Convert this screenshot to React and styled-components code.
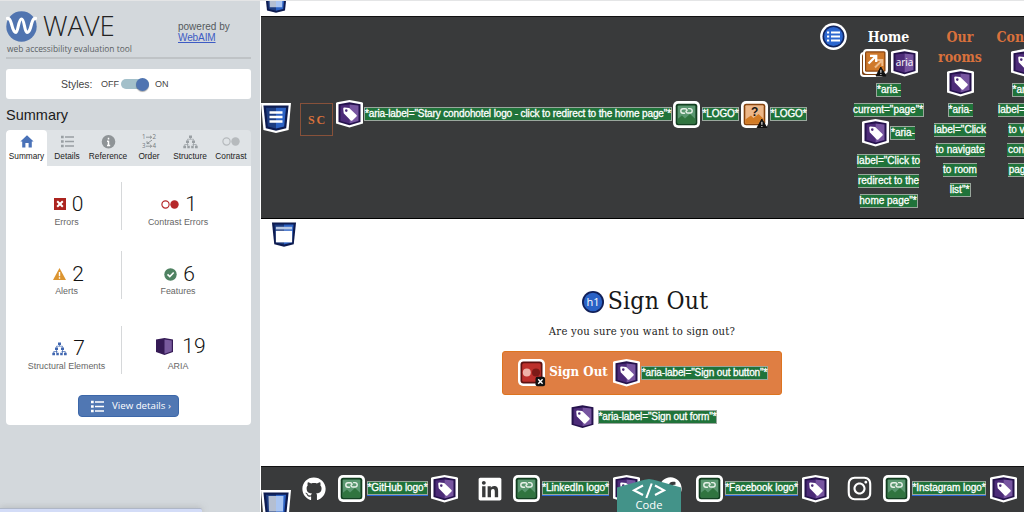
import React from "react";
import styled, { createGlobalStyle } from "styled-components";
import { FaGithub, FaLinkedin, FaFacebook, FaInstagram } from "react-icons/fa";

const sans = '"Liberation Sans", Arial, sans-serif';
const open = '"Open Sans", sans-serif';
const serif = '"DejaVu Serif Condensed", "DejaVu Serif", serif';

const Global = createGlobalStyle`
  * { box-sizing: border-box; }
  body { margin: 0; overflow: hidden; font-family: ${sans}; }
  svg { display: block; flex: none; }
`;

const Screen = styled.div`
  display: flex;
  width: 1024px;
  height: 512px;
  overflow: hidden;
  border-top: 1px solid #e4e5e6;
  background: #fff;
`;

/* ---------- sidebar ---------- */
const Sidebar = styled.aside`
  width: 260px;
  flex: none;
  height: 511px;
  padding: 0 9px 0 6px;
  background: #d3d8dc;
  display: flex;
  flex-direction: column;
`;
const Brand = styled.header`
  height: 58px;
  padding-top: 9px;
  border-bottom: 2px solid #bfc3c6;
  display: flex;
  justify-content: space-between;
`;
const BrandTop = styled.div`
  display: flex;
  align-items: center;
  gap: 6px;
  height: 32px;
`;
const BrandName = styled.span`
  font: 300 27.5px/32px ${open};
  letter-spacing: -0.1px;
  color: #222;
`;
const Tagline = styled.div`
  font: 400 8.4px/12px ${open};
  color: #5b5f63;
  padding-left: 1px;
  margin-top: 1px;
  white-space: nowrap;
`;
const Powered = styled.div`
  width: 73px;
  padding-top: 11px;
  font-size: 10px;
  line-height: 11px;
  color: #54585c;
`;
const Link = styled.a`
  display: block;
  width: max-content;
  color: #3d5bc4;
  text-decoration: underline;
  letter-spacing: -0.1px;
`;
const Styles = styled.div`
  height: 30px;
  margin-top: 10px;
  padding-left: 55px;
  background: #fff;
  border-radius: 3px;
  display: flex;
  align-items: center;
  font-size: 9px;
  color: #444;
`;
const StylesLabel = styled.span`
  width: 40px;
  font-size: 10.5px;
`;
const Track = styled.span`
  width: 28px;
  height: 10px;
  margin: 0 6px 0 2px;
  border-radius: 5px;
  background: #a3c0ca;
  display: flex;
  align-items: center;
  justify-content: flex-end;
`;
const Knob = styled.span`
  width: 13px;
  height: 13px;
  border-radius: 50%;
  background: #4f74b1;
  box-shadow: 0 1px 1px #0005;
`;
const Heading = styled.h2`
  margin: 6px 0 0;
  height: 25px;
  font: 400 14.5px/20px ${sans};
  color: #1b1b1b;
`;
const Tabs = styled.nav`
  height: 36px;
  display: flex;
  border-radius: 4px 4px 0 0;
  background: #dfe3e6;
  overflow: hidden;
`;
const Tab = styled.div`
  flex: 0 0 ${(p) => p.$w}px;
  display: flex;
  flex-direction: column;
  align-items: center;
  padding-top: 4px;
  border-radius: 4px 4px 0 0;
  background: ${(p) => (p.$active ? "#fff" : "transparent")};
  font-size: 8.3px;
  line-height: 12px;
  color: #222;
  white-space: nowrap;
  svg { margin-bottom: 1px; }
`;
const Panel = styled.section`
  height: 259px;
  background: #fff;
  border-radius: 0 0 4px 4px;
  display: flex;
  flex-direction: column;
  align-items: center;
  padding-top: 16px;
`;
const StatRow = styled.div`
  width: 100%;
  height: 48px;
  margin-bottom: ${(p) => p.$gap}px;
  display: flex;
`;
const Stat = styled.div`
  width: ${(p) => (p.$left ? 116 : 129)}px;
  padding-left: ${(p) => (p.$left ? 6 : 0)}px;
  padding-right: ${(p) => (p.$left ? 0 : 17)}px;
  border-right: ${(p) => (p.$left ? "1px solid #d6d8da" : "0")};
  display: flex;
  flex-direction: column;
  align-items: center;
`;
const Count = styled.div`
  display: flex;
  align-items: center;
  gap: ${(p) => p.$gap ?? 6}px;
  height: 24px;
  margin-top: ${(p) => 11 - (p.$up ?? 0)}px;
  margin-bottom: ${(p) => p.$up ?? 0}px;
  padding-left: ${(p) => p.$pl ?? 4}px;
  font: 300 21px/24px Roboto, ${sans};
  color: #111;
`;
const StatLabel = styled.div`
  font-size: 8.9px;
  line-height: 10px;
  color: #666;
  white-space: nowrap;
`;
const Details = styled.button`
  width: 101px;
  height: 22px;
  padding: 0 0 0 12px;
  border: 1px solid #3c67a9;
  border-radius: 4px;
  background: #5077b3;
  color: #fff;
  display: flex;
  align-items: center;
  gap: 8px;
  font: 400 9.7px/20px ${open};
  white-space: nowrap;
`;
const StatusStrip = styled.div`
  width: 202px;
  height: 4px;
  margin: auto 0 0 -6px;
  background: #d3dcf7;
  border-top: 1px solid #aeb6c6;
  border-radius: 0 2px 0 0;
  box-shadow: 0 0 6px #8888;
`;

/* ---------- evaluated page ---------- */
const Page = styled.main`
  flex: 1;
  min-width: 0;
  display: flex;
  flex-direction: column;
  border-left: 1px solid #fff;
  overflow: hidden;
  position: relative;
`;
const Strip = styled.div`
  height: 15px;
  flex: none;
  padding: 0 0 2px 3px;
  overflow: hidden;
  display: flex;
  align-items: flex-end;
`;
const Header = styled.header`
  height: 203px;
  flex: none;
  background: #393a3b;
  border-top: 1px solid #111;
  border-bottom: 1px solid #000;
  display: flex;
  align-items: flex-start;
  overflow: hidden;
`;
const Landmark = styled.div`
  width: 30px;
  flex: none;
  margin-top: 86px;
`;
const LogoBox = styled.div`
  width: 33px;
  height: 33px;
  flex: none;
  margin: 86px 3px 0 9px;
  border: 1px solid #87513a;
  background: #353839;
  color: #d9713c;
  font: 700 12px/33px "Liberation Serif", serif;
  letter-spacing: 1.8px;
  padding-left: 2px;
  text-align: center;
`;
const LogoLine = styled.div`
  display: flex;
  align-items: center;
  flex: none;
  width: 484px;
  margin-top: 83px;
`;
const Tag = styled.span`
  display: inline-flex;
  flex: none;
  justify-content: center;
  align-items: center;
  width: ${(p) => p.$w}px;
  height: 14px;
  margin: ${(p) => p.$m ?? 0};
  background: #20733a;
  border: solid #9aa79d;
  border-width: 1px ${(p) => (p.$end === false ? 0 : 1)}px 1px ${(p) => (p.$start === false ? 0 : 1)}px;
  color: #fff;
  font: 400 10px/12px ${sans};
  -webkit-text-stroke: 0.3px #fff;
  white-space: nowrap;
  letter-spacing: ${(p) => p.$ls ?? 0}px;
  ${(p) => p.$link && "box-shadow: 0 1px 0 #2866d8;"}
`;
const ListBadge = styled.div`
  flex: none;
  margin: 6px 0 0;
  width: 28px;
`;
const Column = styled.div`
  flex: none;
  width: ${(p) => p.$w}px;
  margin-left: ${(p) => p.$ml}px;
  padding-top: 10px;
  display: flex;
  flex-direction: column;
  align-items: center;
`;
const NavLine = styled.div`
  height: 20px;
  font: 700 14px/21px ${serif};
  color: ${(p) => p.$color};
`;
const IconLine = styled.div`
  height: ${(p) => p.$h}px;
  padding-bottom: ${(p) => p.$pb ?? 0}px;
  display: flex;
  align-items: center;
  gap: ${(p) => p.$gap}px;
`;
const TagLine = styled.div`
  height: 20px;
  padding-top: 1px;
  display: flex;
  align-items: center;
`;
const Body = styled.section`
  height: 247px;
  flex: none;
  display: flex;
  flex-direction: column;
`;
const MainLandmark = styled.div`
  height: 28px;
  padding: 3px 0 0 10px;
`;
const Form = styled.form`
  width: 280px;
  margin: 36px 0 0 241px;
  display: flex;
  flex-direction: column;
  align-items: center;
`;
const Title = styled.h1`
  margin: 0 0 0 6px;
  height: 36px;
  display: flex;
  align-items: center;
  gap: 4px;
  font: 400 24.5px/34px ${serif};
  letter-spacing: 0.25px;
  color: #181818;
  white-space: nowrap;
  svg { margin-top: 2px; }
`;
const Question = styled.p`
  margin: 4px 0 0;
  height: 18px;
  font: 400 11.2px/18px ${serif};
  letter-spacing: 0.25px;
  color: #222;
  white-space: nowrap;
`;
const Submit = styled.div`
  width: 280px;
  height: 44px;
  margin-top: 10px;
  padding-left: 15px;
  border: 1px solid #dd741f;
  border-radius: 3px;
  background: #df7e43;
  display: flex;
  align-items: center;
`;
const SubmitText = styled.span`
  width: 59px;
  margin: -2px 5px 0 3px;
  text-align: center;
  white-space: nowrap;
  font: 700 13.2px/20px ${serif};
  color: #fff;
`;
const FormTag = styled.div`
  display: flex;
  align-items: center;
  gap: 4px;
  margin: 10px 0 0 4px;
`;
const Footer = styled.footer`
  height: 46px;
  flex: none;
  background: #393a3b;
  border-top: 1px solid #111;
  display: flex;
  align-items: flex-start;
  overflow: hidden;
`;
const FooterMark = styled.div`
  width: 30px;
  flex: none;
  margin-top: 23px;
`;
const Social = styled.div`
  flex: none;
  display: flex;
  align-items: center;
  height: 29px;
  margin: 7px 0 0 ${(p) => p.$ml}px;
  color: #fff;
`;
const SocialTag = styled.div`
  display: flex;
  align-items: center;
  margin: -1px ${(p) => p.$mr}px 0 2px;
`;
const SocialIcon = styled.div`
  width: ${(p) => p.$w}px;
`;
const CodeTab = styled.div`
  position: absolute;
  left: 356px;
  bottom: 0;
  width: 64px;
  height: 33px;
  overflow: hidden;
  clip-path: polygon(0 26%, 37% 5%, 43% 2%, 50% 0, 57% 2%, 63% 5%, 100% 26%, 100% 100%, 0 100%);
  background: #439389;
  color: #fff;
  display: flex;
  flex-direction: column;
  align-items: center;
  font: 400 11.2px/12px ${open};
  svg { margin: 4px 0 0; }
`;

/* ---------- drawings ---------- */
const shield = "M1 2.2 13.5 0 26 2.2 27 3V23.4L13.5 27.5 0 23.4V3Z";
const Aria = ({ label, bare, size = 27 }) => (
  <svg width={size} height={(size * 28) / 27} viewBox={bare ? "2 2 23 24" : "0 0 27 28"}>
    {!bare && <path d={shield} fill="#fff" />}
    <path d="M2.5 4.2 13.5 2.3 24.5 4.2V22L13.5 25.2 2.5 22Z" fill="#25124c" />
    <path d="M4.5 5.5 13.5 4.5V23.5L4.5 21Z" fill="#4c2b78" />
    <path d="M13.5 4.5 22.5 5.5V21L13.5 23.5Z" fill="#7755a0" />
    {label ? (
      <text x="13.5" y="17" textAnchor="middle" fill="#fff" fontFamily="Open Sans" fontSize="10">aria</text>
    ) : (
      <path fillRule="evenodd" fill="#fff" d="M7.2 8.8Q7.2 7.5 8.5 7.5L13.2 8 20.5 15Q21.2 15.8 20.5 16.5L16.4 20.5Q15.5 21.2 14.7 20.4L7.7 13.3ZM10.3 9.3A1.3 1.3 0 1 0 10.3 11.9 1.3 1.3 0 1 0 10.3 9.3Z" />
    )}
  </svg>
);
const Warn = () => (
  <g>
    <path d="M20.8 18 26 27H16Z" fill="#111" stroke="#111" strokeLinejoin="round" />
    <path d="M20.9 20.8V23.8M20.9 25V26" stroke="#fff" strokeWidth="1" />
  </g>
);
const Alt = () => (
  <svg width="27" height="27" viewBox="0 0 27 27">
    <rect width="27" height="27" rx="5" fill="#fff" />
    <rect x="2.7" y="2.7" width="21.6" height="21.6" rx="2.5" fill="#123f20" />
    <rect x="4.6" y="4.6" width="17.8" height="17.8" rx="1" fill="#5a9770" />
    <path d="M4.6 18 9 14.5 12 17.5 17 13 22.4 18V22.4H4.6Z" fill="#30743f" />
    <path d="M11.5 12.2H10A2.2 2.2 0 0 1 10 7.8H12.3C14.3 7.8 14.6 9.9 13 10.2M15.6 7.6H17A2.2 2.2 0 0 1 17 12H14.8C12.8 12 12.4 9.9 14 9.6" fill="none" stroke="#e8f1e9" strokeWidth="1.4" strokeLinecap="round" />
  </svg>
);
const AltQuestion = () => (
  <svg width="27" height="27" viewBox="0 0 27 27">
    <rect width="27" height="27" rx="5" fill="#fff" />
    <rect x="2.7" y="2.7" width="21.6" height="21.6" rx="2.5" fill="#87430d" />
    <rect x="4.3" y="4.3" width="18.4" height="18.4" rx="1" fill="#edb788" />
    <path d="M4.3 18.5 10 14.5 12.5 17 17.5 13 22.7 18V22.7H4.3Z" fill="#d27b25" />
    <text x="13.7" y="14.5" textAnchor="middle" fontFamily="Liberation Sans" fontWeight="700" fontSize="12" letterSpacing="0" fill="#161616">?</text>
    <Warn />
  </svg>
);
const Redundant = () => (
  <svg width="28" height="28" viewBox="0 0 28 28">
    <rect x="0" y="3" width="24" height="25" rx="4" fill="#fff" />
    <rect x="2" y="5" width="20" height="21" rx="2" fill="#7c3f10" />
    <rect x="3" width="25" height="25" rx="4" fill="#fff" />
    <rect x="5" y="2.3" width="20.5" height="20.5" rx="1.5" fill="#8a4612" />
    <rect x="6.2" y="3.5" width="18" height="18" fill="#cf792b" />
    <path d="M15 18.5 22 11.5M17 11H22.3V17" stroke="#efbc8a" strokeWidth="2" fill="none" />
    <path d="M8.5 14.5 15.5 7.5M10 6.8H16.2V13" stroke="#fff" strokeWidth="2.3" fill="none" />
    <Warn />
  </svg>
);
const ContrastError = () => (
  <svg width="28" height="28" viewBox="0 0 28 28">
    <rect width="27" height="27" rx="5" fill="#fff" />
    <rect x="2.5" y="2.5" width="22" height="22" rx="3" fill="#5e1212" />
    <rect x="4.2" y="4.2" width="18.6" height="18.6" rx="1.5" fill="#bd302c" />
    <circle cx="8.8" cy="13.5" r="4" fill="#efb2a9" />
    <circle cx="18" cy="13.5" r="4" fill="#7d1a17" />
    <rect x="17.5" y="17.8" width="9.6" height="9.4" rx="2" fill="#111" />
    <path d="M20.2 20.3 24.6 24.8M24.6 20.3 20.2 24.8" stroke="#fff" strokeWidth="1.4" />
  </svg>
);
const Bucket = ({ kind, w = 30 }) => (
  <svg width={w} height={w} viewBox={kind === "main" || kind === "top" ? "1.4 2 27.2 27.2" : "0 0 30 30"}>
    {(kind === "nav" || kind === "foot") && <path d="M0 0H30L27.6 27 15 30 2.4 27Z" fill="#fff" />}
    <path d="M2.4 2.4H27.6L25.2 25.2 15 27.8 4.8 25.2Z" fill="#0d1b50" />
    <path d="M5 4.7H15V25.5L6.8 23.4Z" fill="#1d3c80" />
    <path d="M25 4.7H15V25.5L23.2 23.4Z" fill="#2c62c4" />
    {kind === "nav" && <path d="M8.5 9.5H21.5M8.5 14H21.5M8.5 18.5H21.5" stroke="#fff" strokeWidth="2.4" />}
    {kind === "main" && (
      <g>
        <path d="M6.5 7H23.5V9.8H6.5Z" fill="#b9c9e4" />
        <path d="M6.5 11.2H23.5V23.3H6.5Z" fill="#fff" />
      </g>
    )}
    {(kind === "foot" || kind === "top") && (
      <g>
        <path d="M7.5 6H15V21.5H8Z" fill="#b4bfd2" />
        <path d="M15 6H22.5L22 21.5H15Z" fill="#a9c5f2" />
      </g>
    )}
  </svg>
);
const ListIcon = () => (
  <svg width="27" height="27" viewBox="0 0 27 27">
    <circle cx="13.5" cy="13.5" r="13.4" fill="#fff" />
    <circle cx="13.5" cy="13.5" r="11" fill="#10245f" />
    <circle cx="13.5" cy="13.5" r="9.4" fill="#2b66cf" />
    <path d="M11 9.5H20M11 13.5H20M11 17.5H20" stroke="#fff" strokeWidth="2" />
    <path d="M7 9.5H9.2M7 13.5H9.2M7 17.5H9.2" stroke="#fff" strokeWidth="2.2" />
  </svg>
);
const H1Icon = () => (
  <svg width="22" height="22" viewBox="0 0 22 22">
    <circle cx="11" cy="11" r="11" fill="#101f58" />
    <circle cx="11" cy="11" r="9.2" fill="#2a62c6" />
    <text x="11" y="15.2" textAnchor="middle" fontFamily="Open Sans" fontSize="11" letterSpacing="0" fill="#fff">h1</text>
  </svg>
);
const WaveLogo = () => (
  <svg width="31" height="31" viewBox="0 0 31 31">
    <circle cx="15.5" cy="15.5" r="15.2" fill="#5074b0" />
    <path d="M0 8C3 6 4.5 9 5.5 13S8 21.5 10 21.5 12.5 8 15.5 8 18.5 21.5 21 21.5 24.5 17 25.5 13 28 6 31 8" fill="none" stroke="#fff" strokeWidth="3.1" />
  </svg>
);
const Bullets = ({ c = "#999fa3", w = 13 }) => (
  <svg width={w} height="15" viewBox="0 0 13 15">
    <path d="M4 3H13M4 7.5H13M4 12H13" stroke={c} strokeWidth={c === "#fff" ? 1.7 : 1.3} />
    <path d="M0 3H2.7M0 7.5H2.7M0 12H2.7" stroke={c} strokeWidth="2.4" />
  </svg>
);
const Tree = ({ c = "#999fa3", h = 15 }) => (
  <svg width="15" height={h} viewBox="0 0 15 15">
    <path d="M6 1.5H9V4H6ZM3 6.5H6V9H3ZM9 6.5H12V9H9ZM.3 11.8H3V14.2H.3ZM4.3 11.8H6.8V14.2H4.3ZM8.2 11.8H10.7V14.2H8.2ZM12 11.8H14.7V14.2H12Z" fill={c} />
    <path d="M7.5 4V5.2M4.5 6.5V5.2H10.5V6.5M4.5 9V12M10.5 9V12M1.7 12V10.5H5.5M9.5 10.5H13.3V12" stroke={c} strokeWidth=".7" fill="none" />
  </svg>
);
const Home = () => (
  <svg width="14" height="15" viewBox="0 0 14 15">
    <path d="M7 1.2 13.6 7.6H11.8V13.5H8.6V9H5.4V13.5H2.2V7.6H.4Z" fill="#4a72b8" />
  </svg>
);
const Info = () => (
  <svg width="15" height="15" viewBox="0 0 15 15">
    <circle cx="7.5" cy="7.8" r="6.8" fill="#8f9497" />
    <path d="M7.5 3.7V5.5M7.5 6.7V11.7M6 7.2H7.5M6 11.4H9.2" stroke="#fff" strokeWidth="1.5" />
  </svg>
);
const Order = () => (
  <svg width="15" height="15" viewBox="0 0 15 15" fill="#74797d" fontFamily="Open Sans" fontSize="6.2">
    <text x="0" y="5.3">1</text><text x="10.5" y="5.3">2</text>
    <text x="0" y="14.3">3</text><text x="10.5" y="14.3">4</text>
    <path d="M4 3.2H9.5M8 1.8 9.7 3.2 8 4.6M4 12.2H9.5M8 10.8 9.7 12.2 8 13.6M10 6.2 5 9.5M5 7.2V9.6H7.5" stroke="#7f8589" strokeWidth=".8" fill="none" />
  </svg>
);
const Circles = ({ c = "#b6babd", w = 18, h = 15 }) => (
  <svg width={w} height={h} viewBox="0 0 18 15">
    <circle cx="4.5" cy="7.5" r="3.6" fill="none" stroke={c} strokeWidth="1.2" />
    <circle cx="13.5" cy="7.5" r="4.2" fill={c} />
  </svg>
);
const ErrorIcon = () => (
  <svg width="12" height="12" viewBox="0 0 12 12">
    <rect width="12" height="12" fill="#ac241f" />
    <path d="M3.2 3.2 8.8 8.8M8.8 3.2 3.2 8.8" stroke="#fff" strokeWidth="2" />
  </svg>
);
const AlertIcon = () => (
  <svg width="13" height="12" viewBox="0 0 13 12">
    <path d="M6.5 0 13 12H0Z" fill="#dc9530" />
    <path d="M6.5 4V8.3M6.5 9.2V10.7" stroke="#fff" strokeWidth="1.4" />
  </svg>
);
const CheckIcon = () => (
  <svg width="13" height="13" viewBox="0 0 13 13">
    <circle cx="6.5" cy="6.5" r="6.2" fill="#4f8262" />
    <path d="M3.5 6.4 5.8 8.6 9.7 4.5" stroke="#fff" strokeWidth="1.6" fill="none" />
  </svg>
);
const Cube = () => (
  <svg width="17" height="17" viewBox="0 0 17 17">
    <path d="M0 1.5 8.5 0 17 1.5V14L8.5 17 0 14Z" fill="#351a55" />
    <path d="M8.5 1.5 15.8 2.5V13.3L8.5 15.8Z" fill="#795b9e" />
  </svg>
);
const CodeGlyph = () => (
  <svg width="34" height="16" viewBox="0 0 34 16">
    <path d="M11 2.5 2 7.3 11 12M23 2.5 32 7.3 23 12M19.7.5 14.3 15" fill="none" stroke="#fff" strokeWidth="2.1" />
  </svg>
);

const tabs = [
  ["Summary", Home, 41], ["Details", Bullets, 40], ["Reference", Info, 42],
  ["Order", Order, 40], ["Structure", Tree, 42], ["Contrast", Circles, 40],
];

const Lines = ({ items }) =>
  items.map(([text, w, start, end], i) => (
    <TagLine key={i}><Tag $w={w} $start={start} $end={end}>{text}</Tag></TagLine>
  ));

const socials = [
  [FaGithub, 24, "*GitHub logo*", 61, 3, 11, 36],
  [FaLinkedin, 26, "*LinkedIn logo*", 67, 4, 19, 36],
  [FaFacebook, 23, "*Facebook logo*", 73, 4, 19, 37],
  [FaInstagram, 27, "*Instagram logo*", 74, 4, 17, 37],
];

export default function App() {
  return (
    <Screen>
      <Global />
      <Sidebar>
        <Brand>
          <div>
            <BrandTop><WaveLogo /><BrandName>WAVE</BrandName></BrandTop>
            <Tagline>web accessibility evaluation tool</Tagline>
          </div>
          <Powered>powered by<Link>WebAIM</Link></Powered>
        </Brand>
        <Styles>
          <StylesLabel>Styles:</StylesLabel>
          <span>OFF</span><Track><Knob /></Track><span>ON</span>
        </Styles>
        <Heading>Summary</Heading>
        <Tabs>
          {tabs.map(([name, Icon, w], i) => (
            <Tab key={name} $w={w} $active={i === 0}><Icon />{name}</Tab>
          ))}
        </Tabs>
        <Panel>
          <StatRow $gap={21}>
            <Stat $left><Count $up={1}><ErrorIcon />0</Count><StatLabel>Errors</StatLabel></Stat>
            <Stat><Count $up={1} $pl={2}><Circles c="#b5282a" />1</Count><StatLabel>Contrast Errors</StatLabel></Stat>
          </StatRow>
          <StatRow $gap={27}>
            <Stat $left><Count><AlertIcon />2</Count><StatLabel>Alerts</StatLabel></Stat>
            <Stat><Count $pl={3}><CheckIcon />6</Count><StatLabel>Features</StatLabel></Stat>
          </StatRow>
          <StatRow $gap={21}>
            <Stat $left><Count $up={1} $pl={4}><Tree c="#3f66b0" />7</Count><StatLabel>Structural Elements</StatLabel></Stat>
            <Stat><Count $up={3} $pl={6} $gap={9}><Cube />19</Count><StatLabel>ARIA</StatLabel></Stat>
          </StatRow>
          <Details><Bullets c="#fff" />View details ›</Details>
        </Panel>
        <StatusStrip />
      </Sidebar>

      <Page>
        <Strip><Bucket kind="top" w={24} /></Strip>
        <Header>
          <Landmark><Bucket kind="nav" /></Landmark>
          <LogoBox>SC</LogoBox>
          <LogoLine>
            <Aria />
            <Tag $w={308} $ls={-0.12} $m="0 1px">*aria-label="Stary condohotel logo - click to redirect to the home page"*</Tag>
            <Alt /><Tag $w={37} $ls={-0.15} $m="0 2px">*LOGO*</Tag>
            <AltQuestion /><Tag $w={37} $ls={-0.15} $m="0 2px">*LOGO*</Tag>
          </LogoLine>
          <ListBadge><ListIcon /></ListBadge>
          <Column $w={73} $ml={4}>
            <NavLine $color="#fff">Home</NavLine>
            <IconLine $h={32} $gap={3}><Redundant /><Aria label /></IconLine>
            <Lines items={[['*aria-', 25, true, false], ['current="page"*', 70, false, true]]} />
            <IconLine $h={31} $pb={3} $gap={1}><Aria /><Tag $w={25} $end={false}>*aria-</Tag></IconLine>
            <Lines items={[['label="Click to', 63, false, false], ["redirect to the", 61, false, false], ['home page"*', 58, false, true]]} />
          </Column>
          <Column $w={60} $ml={5}>
            <NavLine $color="#d9713c">Our</NavLine>
            <NavLine $color="#d9713c">rooms</NavLine>
            <IconLine $h={32}><Aria /></IconLine>
            <Lines items={[["*aria-", 25, true, false], ['label="Click', 52, false, false], ["to navigate", 49, false, false], ["to room", 34, false, false], ['list"*', 21, false, true]]} />
          </Column>
          <Column $w={60} $ml={4}>
            <NavLine $color="#d9713c">Contact</NavLine>
            <IconLine $h={32}><Aria /></IconLine>
            <Lines items={[["*aria-", 25, true, false], ['label="Click', 52, false, false], ["to view", 33, false, false], ["contact", 34, false, false], ['page"*', 32, false, true]]} />
          </Column>
        </Header>
        <Body>
          <MainLandmark><Bucket kind="main" w={26} /></MainLandmark>
          <Form>
            <Title><H1Icon />Sign Out</Title>
            <Question>Are you sure you want to sign out?</Question>
            <Submit>
              <ContrastError />
              <SubmitText>Sign Out</SubmitText>
              <Aria /><Tag $w={127} $ls={-0.12} $m="0 0 0 1px">*aria-label="Sign out button"*</Tag>
            </Submit>
            <FormTag><Aria bare size={23} /><Tag $w={119} $ls={-0.12}>*aria-label="Sign out form"*</Tag></FormTag>
          </Form>
        </Body>
        <Footer>
          <FooterMark><Bucket kind="foot" /></FooterMark>
          {socials.map(([Icon, size, text, w, mr, ml, iw]) => (
            <Social key={text} $ml={ml}>
              <SocialIcon $w={iw}><Icon size={size} /></SocialIcon>
              <Alt />
              <SocialTag $mr={mr}><Tag $w={w} $ls={-0.05} $link>{text}</Tag></SocialTag>
              <Aria />
            </Social>
          ))}
        </Footer>
        <CodeTab><CodeGlyph />Code</CodeTab>
      </Page>
    </Screen>
  );
}
